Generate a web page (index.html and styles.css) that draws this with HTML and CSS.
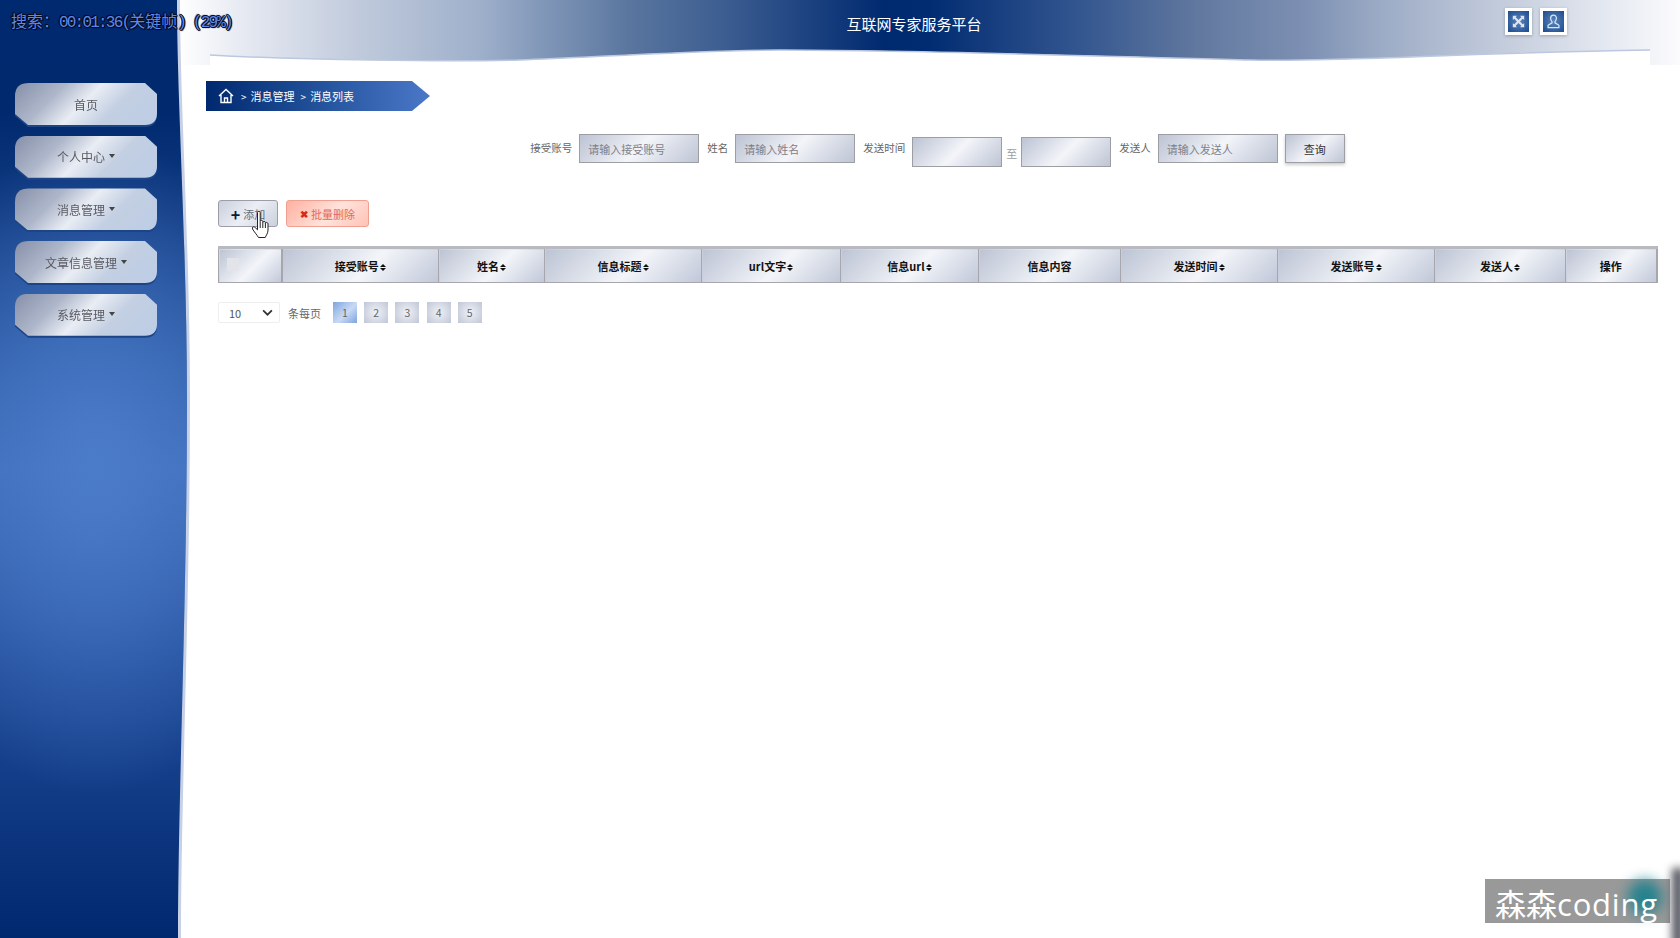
FILE: index.html
```html
<!DOCTYPE html>
<html>
	<head>
		<meta charset="UTF-8">
		<title>互联网专家服务平台</title>
		<link rel="stylesheet" href="styles.css">
	</head>
	<body>
		<aside class="sidebar">
			<div class="sidebar-fill">
				<nav class="menu">
					<div class="menu-item"><a class="menu-link">首页</a></div>
					<div class="menu-item"><a class="menu-link">个人中心<i class="caret"></i></a></div>
					<div class="menu-item"><a class="menu-link">消息管理<i class="caret"></i></a></div>
					<div class="menu-item"><a class="menu-link">文章信息管理<i class="caret"></i></a></div>
					<div class="menu-item"><a class="menu-link">系统管理<i class="caret"></i></a></div>
				</nav>
			</div>
		</aside>

		<div class="seek-text"><span class="seek-cjk">搜索：</span>00:01:36(<span class="seek-cjk">关键帧</span>) (29%)</div>

		<div class="main">
			<header class="header">
				<svg class="header-wave" viewBox="0 0 1502 65" preserveAspectRatio="none">
					<path class="wave-fill" d="M32 55 C122 60 272 62 342 60 C422 57 502 51 602 50 C722 50 922 56 1072 60 C1172 62 1272 53 1472 50 V65 H32 Z"/>
					<path class="wave-line" d="M32 55 C122 60 272 62 342 60 C422 57 502 51 602 50 C722 50 922 56 1072 60 C1172 62 1272 53 1472 50"/>
				</svg>
				<div class="header-title">互联网专家服务平台</div>
				<div class="header-tools">
					<a class="tool-btn">
						<svg viewBox="0 0 16 16" width="13" height="13">
							<path d="M1 1h5L4.600 2.800 8 6.100 11.400 2.800 10 1h5v5l-1.800-1.400L9.900 8l3.300 3.400L15 10v5h-5l1.400-1.800L8 9.900l-3.400 3.300L6 15H1v-5l1.800 1.400L6.100 8 2.800 4.600 1 6z"/>
						</svg>
					</a>
					<a class="tool-btn">
						<svg viewBox="0 0 16 16" width="15" height="15">
							<path class="user-icon" d="M8 1.200c-2 0-3.100 1.500-3.100 3.400 0 1.500.7 2.800 1.500 3.500v1.300L2.200 12v2.500h11.600V12L9.600 9.400V8.100c.8-.7 1.500-2 1.500-3.500C11.100 2.700 10 1.200 8 1.200z"/>
						</svg>
					</a>
				</div>
			</header>

			<div class="content">
				<div class="crumb">
					<svg class="crumb-home" viewBox="0 0 16 16" width="16" height="16">
						<path d="M1 8 8 1.500 15 8M3 7v7.500h10V7M6.500 14.500V10h3v4.500"/>
					</svg>
					<span class="crumb-sep">&gt;</span><span>消息管理</span><span class="crumb-sep">&gt;</span><span>消息列表</span>
				</div>

				<form class="search-row">
					<label class="search-label">接受账号</label>
					<input class="silver search-input" placeholder="请输入接受账号">
					<label class="search-label">姓名</label>
					<input class="silver search-input" placeholder="请输入姓名">
					<label class="search-label">发送时间</label>
					<span class="silver date-input"></span>
					<span class="date-sep">至</span>
					<span class="silver date-input"></span>
					<label class="search-label">发送人</label>
					<input class="silver search-input" placeholder="请输入发送人">
					<button class="silver search-btn" type="button">查询</button>
				</form>

				<div class="actions">
					<button class="act-btn act-add" type="button"><b class="act-plus">+</b>添加</button>
					<button class="act-btn act-del" type="button"><b class="act-x">&#x2716;</b>批量删除</button>
				</div>

				<table class="list">
					<colgroup>
						<col class="c-check"><col class="c-wide"><col class="c-name"><col class="c-wide"><col class="c-url"><col class="c-info"><col class="c-body"><col class="c-wide"><col class="c-wide"><col class="c-send"><col class="c-op">
					</colgroup>
					<thead>
						<tr>
							<th><span class="check"></span></th>
							<th>接受账号<i class="sort"></i></th>
							<th>姓名<i class="sort"></i></th>
							<th>信息标题<i class="sort"></i></th>
							<th>url文字<i class="sort"></i></th>
							<th>信息url<i class="sort"></i></th>
							<th>信息内容</th>
							<th>发送时间<i class="sort"></i></th>
							<th>发送账号<i class="sort"></i></th>
							<th>发送人<i class="sort"></i></th>
							<th>操作</th>
						</tr>
					</thead>
				</table>

				<div class="pager">
					<div class="page-size">10<svg viewBox="0 0 12 8" width="11" height="7"><path d="M1 1.500 6 6.500 11 1.500"/></svg></div>
					<span class="page-label">条每页</span>
					<a class="page-num page-on">1</a>
					<a class="page-num">2</a>
					<a class="page-num">3</a>
					<a class="page-num">4</a>
					<a class="page-num">5</a>
				</div>
			</div>
		</div>

		<!-- mouse pointer caught over the add button -->
		<svg class="pointer" viewBox="0 0 20 30" width="20" height="30">
			<path d="M6.500 2.500c0-1.600 2.700-1.600 2.700 0v9c0-1.400 2.600-1.400 2.600 0v1c0-1.400 2.600-1.400 2.600 0v1c0-1.300 2.600-1.300 2.600 .2v6.300c0 3-1.800 5.500-2.800 7.500H7.500C6 25 3 21.500 1.500 19c-.9-1.600 1-3 2.300-1.800l2.700 2.600z"/>
			<path d="M9.200 12v6M11.800 12.500v5.500M14.400 13.500v4.500"/>
		</svg>

		<div class="video-mark">
			<div class="video-blob"></div>
			<span class="mark-text">森森<span class="mark-latin">coding</span></span>
		</div>
		<div class="video-edge"></div>
	</body>
</html>
```

FILE: styles.css
```css
html, body {
	height: 100%;
}
body {
	display: flex;
	margin: 0;
	overflow: hidden;
	background-color: #FFFFFF;
	font-family: "Noto Sans CJK SC", "Noto Sans", sans-serif;
	font-size: 11px;
	color: #555555;
}

/* sidebar */
.sidebar {
	position: relative;
	z-index: 2;
	flex: none;
	width: 190px;
	height: 938px;
	background-color: #C6D1E7;
	clip-path: path("M0 0 H180 C180 100 190 250 190 400 C190 600 181 800 181 938 H0 Z");
}
.sidebar-fill {
	height: 100%;
	padding-top: 83px;
	box-sizing: border-box;
	background:
		radial-gradient(ellipse 210px 330px at 95px 466px, #4B7CCA 0%, rgba(75, 124, 202, 0) 100%),
		linear-gradient(180deg, #002A70 0%, #00296E 12%, #3E6CB8 50%, #1F4A97 72%, #00286F 100%);
	clip-path: path("M0 0 H177 C177 100 187 250 187 400 C187 600 178 800 178 938 H0 Z");
}
.menu {
	display: flex;
	flex-direction: column;
	gap: 8.700px;
	padding-left: 15px;
}
.menu-item {
	width: 142px;
	height: 44px;
	filter: drop-shadow(0 2px 0 #1D4484);
}
.menu-link {
	display: flex;
	align-items: center;
	justify-content: center;
	height: 42px;
	background: linear-gradient(135deg, #858FA8 0%, #AEB7CA 28%, #E9EDF4 48%, #C3CFE2 68%, #BCCDE6 100%);
	clip-path: path("M14 0 H130 L142 11 V30 Q142 42 130 42 H13 L0 31 V13 Q0 0 14 0 Z");
	font-size: 12px;
	color: #5A5A62;
}
.caret {
	display: inline-block;
	margin-left: 4px;
	margin-bottom: 1px;
	border-top: 4px solid #444444;
	border-left: 3.500px solid transparent;
	border-right: 3.500px solid transparent;
}

/* video player text over the page */
.seek-text {
	position: absolute;
	z-index: 3;
	top: 9px;
	left: 11px;
	font-family: "Liberation Mono", monospace;
	font-size: 16px;
	letter-spacing: -1.800px;
	line-height: 22px;
	color: #5C88EE;
	text-shadow: 1px 0 0 #050A1C, -1px 0 0 #050A1C, 0 1px 0 #050A1C, 0 -1px 0 #050A1C, 1px 1px 1px #050A1C, -1px -1px 1px #050A1C;
	white-space: nowrap;
}
.seek-cjk {
	font-family: "Noto Sans CJK SC", sans-serif;
	letter-spacing: 0;
}

/* header */
.main {
	flex: 1;
	min-width: 0;
}
.header {
	position: relative;
	display: flex;
	justify-content: center;
	height: 65px;
	margin-left: -12px;
	padding-right: 30px;
	box-sizing: border-box;
	background: linear-gradient(90deg, #FFFFFF 0%, #E8EBF3 4%, #C0CADC 12%, #9FB0CB 20%, #5A769F 30%, #3E5F92 36%, #002A70 47%, #012C72 50%, #33568F 60%, #62799F 68%, #7D90B3 75%, #9BABC5 80%, #B4BFD3 85%, #E4E8F0 95%, #FBFBFD 100%);
}
.header-wave {
	position: absolute;
	inset: 0;
	width: 100%;
	height: 100%;
}
.wave-fill {
	fill: #FFFFFF;
}
.wave-line {
	fill: none;
	stroke: #BCC8E0;
	stroke-width: 1.500;
}
.header-title {
	position: relative;
	padding-top: 13px;
	font-size: 15px;
	line-height: 22px;
	color: #FFFFFF;
}
.header-tools {
	position: absolute;
	top: 8px;
	left: 1327px;
	display: flex;
	gap: 8px;
}
.tool-btn {
	display: flex;
	align-items: center;
	justify-content: center;
	width: 21px;
	height: 21px;
	border: 3px solid #FFFFFF;
	background: radial-gradient(circle, #5B86BD 0%, #1B4A8D 100%);
	box-shadow: 0 1px 3px rgba(0, 0, 0, 0.25);
}
.tool-btn svg {
	fill: #DCE6F2;
}
.tool-btn .user-icon {
	fill: none;
	stroke: #DCE6F2;
	stroke-width: 1.300;
}

/* content */
.content {
	padding: 16px 22px 0 16px;
}
.crumb {
	display: flex;
	align-items: center;
	width: 224px;
	height: 30px;
	padding-left: 12px;
	box-sizing: border-box;
	background: linear-gradient(90deg, #00286E 0%, #1B4A92 40%, #4A78C8 100%);
	clip-path: polygon(0 0, 206px 0, 224px 50%, 206px 100%, 0 100%);
	font-size: 11px;
	color: #FFFFFF;
}
.crumb-home {
	fill: none;
	stroke: #FFFFFF;
	stroke-width: 1.400;
}
.crumb-sep {
	margin: 0 4px 0 6px;
	font-size: 10px;
}
.crumb-home + .crumb-sep {
	margin-left: 7px;
}

.silver {
	background: linear-gradient(135deg, #BCC3D3 0%, #DADEE8 28%, #F3F5F9 50%, #D9DDE8 74%, #BEC5D4 100%);
	border: 1px solid #9C9EA4;
	box-sizing: border-box;
}
.search-row {
	display: flex;
	align-items: flex-start;
	justify-content: center;
	height: 32px;
	margin: 23px 0 0 -32px;
	padding-left: 35px;
}
.search-label {
	margin-left: 8px;
	margin-right: 7px;
	font-size: 10.500px;
	line-height: 28px;
	color: #666666;
	white-space: nowrap;
}
.search-input {
	width: 120px;
	height: 29px;
	padding: 0 8px;
	font-family: inherit;
	font-size: 11px;
}
.search-input::placeholder {
	color: #808088;
}
.date-input {
	width: 90px;
	height: 30px;
	margin-top: 3px;
}
.date-sep {
	margin: 8px 4px 0;
	line-height: 22px;
	color: #A0A0A0;
}
.search-btn {
	width: 60px;
	height: 29px;
	margin-left: 7px;
	box-shadow: 0 2px 3px rgba(0, 0, 0, 0.2);
	font-family: inherit;
	font-size: 11px;
	color: #333333;
}

.actions {
	display: flex;
	gap: 8px;
	margin: 34px 0 0 12px;
}
.act-btn {
	display: flex;
	align-items: center;
	justify-content: center;
	height: 27px;
	padding: 0;
	border-radius: 3px;
	font-family: inherit;
	font-size: 11px;
}
.act-add {
	width: 60px;
	border: 1px solid #9A9EA8;
	background: linear-gradient(135deg, #C9CFDC 0%, #ECEEF4 50%, #CBD0DD 100%);
	color: #666A74;
}
.act-del {
	width: 83px;
	border: 1px solid #F0A090;
	background: linear-gradient(135deg, #FFB0A0 0%, #FFE3DC 55%, #FFC2B6 100%);
	color: #E06A5C;
}
.act-plus {
	margin-right: 3px;
	font-size: 16px;
	line-height: 16px;
	color: #0A1A3C;
}
.act-x {
	margin-right: 3px;
	font-size: 10px;
	color: #D22B1E;
}

.list {
	width: 1438px;
	margin: 19px 0 0 12px;
	table-layout: fixed;
	border-collapse: collapse;
	border-top: 3px solid #B9B9C0;
	border-left: 1px solid #A6A6AC;
	border-right: 2px solid #A6A6AC;
	border-bottom: 1px solid #A6A6AC;
}
.c-check { width: 63px; }
.c-wide { width: 157px; }
.c-name { width: 106px; }
.c-url { width: 139px; }
.c-info { width: 138px; }
.c-body { width: 142px; }
.c-send { width: 131px; }
.c-op { width: 91px; }
.list th {
	height: 33px;
	padding: 0;
	background: linear-gradient(135deg, #BCC3D3 0%, #D9DEE8 30%, #F3F5F9 55%, #D9DEE9 78%, #C0C7D7 100%);
	border-right: 1px solid #A6A6AC;
	font-size: 11px;
	font-weight: bold;
	color: #111111;
}
.list th:first-child {
	text-align: left;
	border-right-width: 2px;
}
.list th:last-child {
	border-right: none;
}
.check {
	display: block;
	width: 12px;
	height: 13px;
	margin-left: 8px;
	margin-bottom: 3px;
	background-color: #E2E4EA;
}
.sort {
	display: inline-flex;
	flex-direction: column;
	gap: 1px;
	margin-left: 1px;
	vertical-align: middle;
}
.sort::before, .sort::after {
	content: "";
	border-left: 3px solid transparent;
	border-right: 3px solid transparent;
}
.sort::before {
	border-bottom: 3px solid #111111;
}
.sort::after {
	border-top: 3px solid #111111;
}
.pager {
	display: flex;
	align-items: center;
	margin: 19px 0 0 12px;
}
.page-size {
	display: flex;
	align-items: center;
	justify-content: space-between;
	width: 62px;
	height: 21px;
	padding: 0 6px 0 10px;
	box-sizing: border-box;
	border: 1px solid #EEEEEE;
	border-radius: 2px;
	color: #555555;
}
.page-size path {
	fill: none;
	stroke: #333333;
	stroke-width: 2;
}
.page-label {
	margin: 0 12px 0 8px;
	color: #666666;
}
.page-num {
	display: block;
	width: 24px;
	height: 21px;
	margin-right: 7.200px;
	background: radial-gradient(circle, #F0F2F7 0%, #BFC6D6 100%);
	text-align: center;
	line-height: 21px;
	font-size: 10.500px;
	color: #666666;
}
.page-on {
	background: linear-gradient(135deg, #7FA4DE 0%, #C8DAF4 55%, #7EA3DE 100%);
}

/* overlays */
.pointer {
	position: absolute;
	top: 210px;
	left: 251px;
}
.pointer path {
	fill: #FFFFFF;
	stroke: #222222;
	stroke-width: 1;
}
.video-mark {
	position: absolute;
	top: 879px;
	left: 1485px;
	width: 185px;
	height: 44px;
	padding-left: 10px;
	box-sizing: border-box;
	background-color: #999999;
	font-family: "Open Sans", "Noto Sans CJK SC", sans-serif;
	font-size: 31px;
	line-height: 51px;
	color: #FFFFFF;
	white-space: nowrap;
}
.mark-text {
	position: relative;
}
.mark-latin {
	letter-spacing: 0.800px;
}
.video-blob {
	position: absolute;
	top: 1px;
	left: 143px;
	width: 34px;
	height: 34px;
	border-radius: 50%;
	background-color: #0F7E8C;
	filter: blur(7px);
	opacity: 0.85;
}
.video-edge {
	position: absolute;
	top: 868px;
	left: 1672px;
	width: 12px;
	height: 80px;
	background-color: #555560;
	filter: blur(4px);
}
```
